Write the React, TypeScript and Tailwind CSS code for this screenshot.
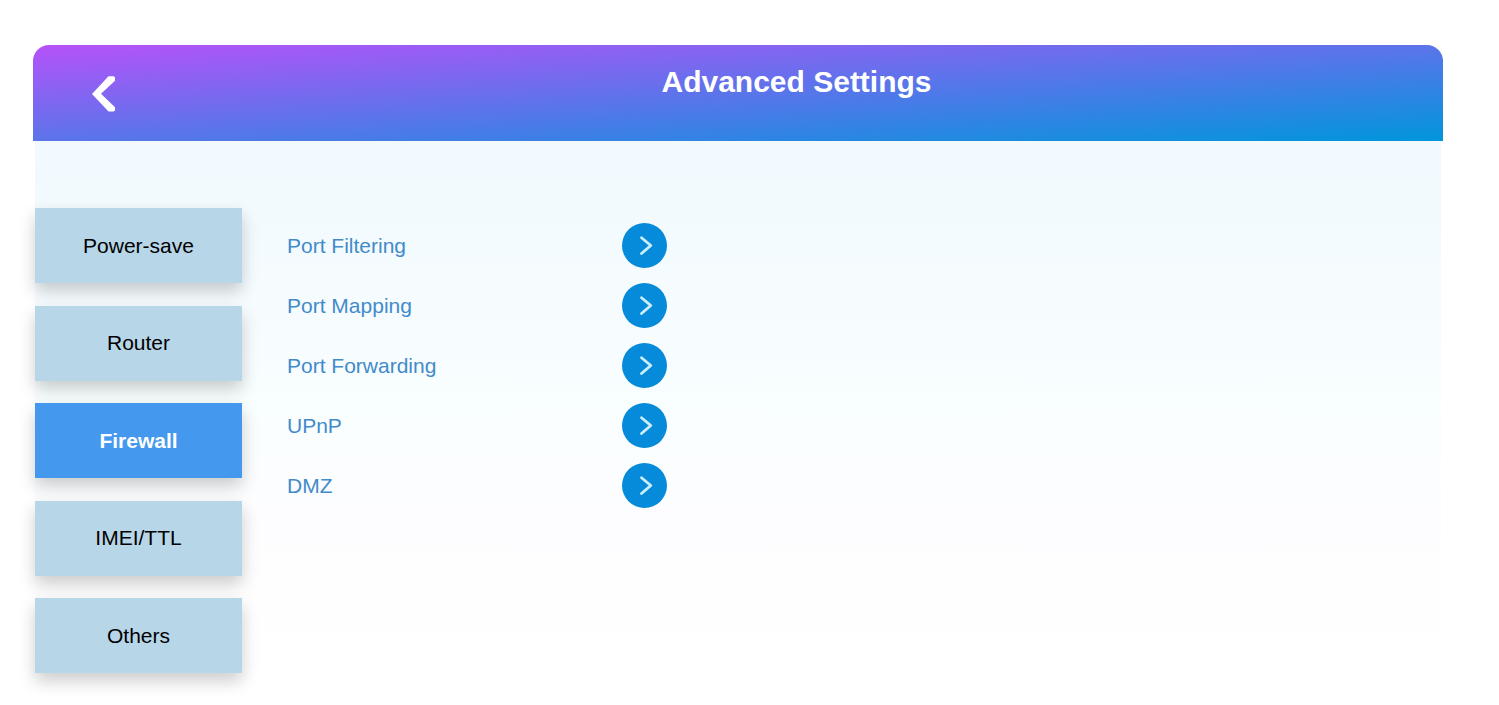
import { useState } from "react";
import clsx from "clsx";

const tabs = ["Power-save", "Router", "Firewall", "IMEI/TTL", "Others"];

const firewallItems = [
  { label: "Port Filtering", href: "#port-filtering" },
  { label: "Port Mapping", href: "#port-mapping" },
  { label: "Port Forwarding", href: "#port-forwarding" },
  { label: "UPnP", href: "#upnp" },
  { label: "DMZ", href: "#dmz" },
];

function BackIcon() {
  return (
    <svg width="24" height="36" viewBox="0 0 24 36" fill="#fff" aria-hidden="true">
      <path d="M16.5 .3h5.2l1.3 1v3.4L9 17.8l14 13.4v3.2l-1.3 1h-5.2L0 18z" />
    </svg>
  );
}

function GoIcon() {
  return (
    <svg width="45" height="45" viewBox="0 0 45 45" fill="none" aria-hidden="true">
      <circle cx="22.5" cy="22.5" r="22.5" fill="#058bd9" />
      <path
        d="M19.5 14.7l9.3 7.8-9.3 8"
        stroke="#cdeffb"
        strokeWidth="2.8"
        strokeLinecap="round"
        strokeLinejoin="round"
      />
    </svg>
  );
}

export default function App() {
  const [activeTab, setActiveTab] = useState("Firewall");

  return (
    <div className="min-h-screen bg-white pt-[45px] pr-14 pb-8 pl-[33px] font-['Liberation_Sans',Arial,sans-serif]">
      <header className="flex h-24 items-start rounded-t-2xl bg-linear-[to_bottom_right,#b652fa,#0096db]">
        <button type="button" aria-label="Back" className="w-[117px] shrink-0 cursor-pointer pt-[31px] pl-[59px]">
          <BackIcon />
        </button>
        <h1 className="flex-1 pt-[19px] text-center text-[30px] leading-9 font-bold text-white">
          Advanced Settings
        </h1>
      </header>

      <main className="mx-0.5 flex items-start bg-linear-[to_bottom,#f2f9ff,#f4fbfe_20%,#f9feff_50%,#fdfdff_70%,#ffffff] pt-[67px]">
        <nav className="flex h-[465px] w-[207px] shrink-0 flex-col justify-between">
          {tabs.map((tab) => (
            <button
              key={tab}
              type="button"
              onClick={() => setActiveTab(tab)}
              className={clsx(
                "h-[75px] cursor-pointer text-[21px] leading-[30px] shadow-[0_8px_16px_rgba(0,0,0,0.2)]",
                tab === activeTab ? "bg-[#4499ee] font-bold text-white" : "bg-[#b7d6e8] text-black"
              )}
            >
              {tab}
            </button>
          ))}
        </nav>

        {activeTab === "Firewall" && (
          <ul className="ml-[45px] w-[380px] pt-[15px]">
            {firewallItems.map((item) => (
              <li key={item.label} className="mb-[15px]">
                <a
                  href={item.href}
                  className="flex items-center justify-between text-[21px] leading-[30px] text-[#428bca]"
                >
                  {item.label}
                  <GoIcon />
                </a>
              </li>
            ))}
          </ul>
        )}
      </main>
    </div>
  );
}
